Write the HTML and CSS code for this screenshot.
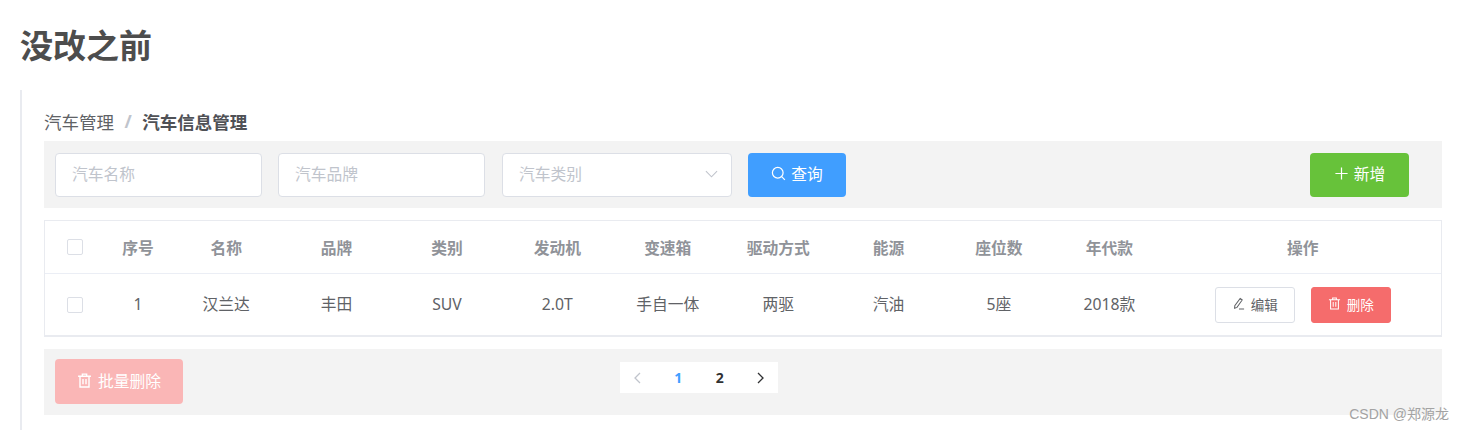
FILE: index.html
```html
<!DOCTYPE html>
<html lang="zh-CN">
<head>
  <meta charset="UTF-8" />
  <title>没改之前</title>
  <link rel="stylesheet" href="styles.css">
</head>
<body>

  <h1 class="title">没改之前</h1>

  <div class="panel">
    <div class="crumb">
      <span>汽车管理</span>
      <span class="crumb-sep">/</span>
      <b>汽车信息管理</b>
    </div>

    <div class="bar toolbar">
      <div class="field field-name">汽车名称</div>
      <div class="field field-brand">汽车品牌</div>
      <div class="field field-type">
        <span>汽车类别</span>
        <svg class="arrow" viewBox="0 0 14 8"><path d="M1 1l6 6 6-6" /></svg>
      </div>
      <button class="btn btn-blue">
        <svg class="icon" viewBox="0 0 16 16"><circle cx="7.2" cy="7.2" r="5.7" /><path d="M11.4 11.4l3.4 3.4" /></svg>
        查询
      </button>
      <button class="btn btn-green">
        <svg class="icon" viewBox="0 0 16 16"><path d="M8 1.5v13M1.5 8h13" /></svg>
        新增
      </button>
    </div>

    <table class="grid">
      <colgroup>
        <col class="c-check"><col class="c-num">
        <col class="c-std"><col class="c-std"><col class="c-std"><col class="c-std"><col class="c-std">
        <col class="c-std"><col class="c-std"><col class="c-std"><col class="c-std">
        <col>
      </colgroup>
      <thead>
        <tr>
          <th><span class="check"></span></th>
          <th>序号</th>
          <th>名称</th>
          <th>品牌</th>
          <th>类别</th>
          <th>发动机</th>
          <th>变速箱</th>
          <th>驱动方式</th>
          <th>能源</th>
          <th>座位数</th>
          <th>年代款</th>
          <th>操作</th>
        </tr>
      </thead>
      <tbody>
        <tr>
          <td><span class="check check-row"></span></td>
          <td>1</td>
          <td>汉兰达</td>
          <td>丰田</td>
          <td>SUV</td>
          <td>2.0T</td>
          <td>手自一体</td>
          <td>两驱</td>
          <td>汽油</td>
          <td>5座</td>
          <td>2018款</td>
          <td>
            <div class="ops">
              <button class="btn-small btn-plain">
                <svg class="icon-small" viewBox="0 0 14 14"><path d="M8.8 1.6l2.2 1.6-5.6 8-2.6 1 .2-2.8zM7.5 13h5.5" /></svg>
                编辑
              </button>
              <button class="btn-small btn-red">
                <svg class="icon-small" viewBox="0 0 14 14"><path d="M1 3h12M5 3V1h4v2M2.8 3v10h8.4V3M5.6 5.5v5M8.4 5.5v5" /></svg>
                删除
              </button>
            </div>
          </td>
        </tr>
      </tbody>
    </table>

    <div class="bar footer">
      <button class="btn btn-batch">
        <svg class="icon" viewBox="0 0 14 14"><path d="M1 3h12M5 3V1h4v2M2.8 3v10h8.4V3M5.6 5.5v5M8.4 5.5v5" /></svg>
        批量删除
      </button>
      <div class="pager">
        <svg class="pager-arrow off" viewBox="0 0 8 12"><path d="M7 1L2 6l5 5" /></svg>
        <span class="page on">1</span>
        <span class="page">2</span>
        <svg class="pager-arrow" viewBox="0 0 8 12"><path d="M1 1l5 5-5 5" /></svg>
      </div>
    </div>
  </div>

  <div class="mark">CSDN @郑源龙</div>

</body>
</html>
```

FILE: styles.css
```css
html, body {
  height: 430px;
  overflow: hidden;
}

body {
  margin: 0;
  position: relative;
  background: #fff;
  color: #606266;
  font-family: "Noto Sans", "Noto Sans CJK SC", sans-serif;
  font-size: 15.75px;
}

.title {
  margin: 0;
  padding: 21px 0 0 20px;
  height: 90px;
  box-sizing: border-box;
  font-family: "Noto Sans CJK SC", sans-serif;
  font-size: 33px;
  line-height: 46px;
  font-weight: 700;
  color: #4d4d4d;
}

.panel {
  margin: 0 22px 0 20px;
  height: 340px;
  box-sizing: border-box;
  border-left: 2px solid #e9ebf0;
  padding: 20px 0 0 22px;
}

.crumb {
  height: 31px;
  box-sizing: border-box;
  padding-bottom: 9px;
  display: flex;
  align-items: center;
  font-size: 17.5px;
  color: #606266;
}

.crumb-sep {
  margin: 0 10.5px;
  font-weight: 700;
  color: #c0c4cc;
}

.crumb b {
  color: #4f5156;
}

.bar {
  background: #f3f3f3;
  box-sizing: border-box;
}

.toolbar {
  height: 67px;
  display: flex;
  align-items: center;
  padding: 0 33px 0 11px;
}

.field {
  height: 44px;
  box-sizing: border-box;
  background: #fff;
  border: 1px solid #dcdfe6;
  border-radius: 4px;
  padding: 0 16px 2px;
  display: flex;
  align-items: center;
  justify-content: space-between;
  color: #c0c4cc;
}

.field-name { width: 207px; margin-right: 16px; }
.field-brand { width: 207px; margin-right: 17px; }
.field-type { width: 230px; margin-right: 16px; padding-right: 13px; }

.arrow {
  width: 13px;
  height: 8px;
  fill: none;
  stroke: #c0c4cc;
  stroke-width: 1.2;
}

.btn {
  height: 44px;
  border: 0;
  border-radius: 4px;
  padding: 0 0 2px;
  display: flex;
  align-items: center;
  justify-content: center;
  gap: 5px;
  color: #fff;
  font: inherit;
}

.icon {
  width: 15px;
  height: 15px;
  fill: none;
  stroke: #fff;
  stroke-width: 1.3;
}

.btn-blue { width: 98px; background: #409eff; }
.btn-green { width: 99px; margin-left: auto; background: #67c23a; }
.btn-batch { width: 128px; height: 45px; background: #fab6b6; gap: 6px; }

.grid {
  width: 100%;
  margin: 12px 0;
  table-layout: fixed;
  border-collapse: separate;
  border-spacing: 0;
  border: 1px solid #e9ebf0;
  border-bottom-width: 2px;
  box-sizing: border-box;
}

.c-check { width: 60px; }
.c-num { width: 66px; }
.c-std { width: 110.4px; }

.grid th, .grid td {
  padding: 0;
  text-align: center;
}

.grid th {
  height: 52px;
  border-bottom: 1px solid #ebeef5;
  color: #909399;
  font-weight: 700;
}

.grid td {
  height: 59px;
  padding-bottom: 2px;
}

.check {
  display: block;
  width: 14px;
  height: 14px;
  margin: 0 auto;
  background: #fff;
  border: 1px solid #dcdfe6;
  border-radius: 2px;
}

.check-row {
  margin-top: 2px;
}

.ops {
  display: flex;
  justify-content: center;
  gap: 16px;
  margin-top: 2px;
}

.btn-small {
  width: 80px;
  height: 36px;
  border-radius: 3px;
  padding: 0 0 2px;
  display: flex;
  align-items: center;
  justify-content: center;
  gap: 6px;
  font: inherit;
  font-size: 13.5px;
}

.btn-plain {
  background: #fff;
  border: 1px solid #dcdfe6;
  color: #606266;
}

.btn-red {
  background: #f56c6c;
  border: 1px solid #f56c6c;
  color: #fff;
}

.icon-small {
  width: 13px;
  height: 13px;
  fill: none;
  stroke: currentColor;
  stroke-width: 1.1;
}

.footer {
  height: 66px;
  position: relative;
  padding: 10px 0 0 11px;
}

.pager {
  position: absolute;
  left: 576px;
  top: 13px;
  width: 158px;
  height: 31px;
  background: #fff;
  display: flex;
  align-items: center;
  justify-content: space-between;
  padding: 0 13px;
  box-sizing: border-box;
  font-size: 14px;
  font-weight: 700;
  color: #303133;
}

.page.on {
  color: #409eff;
}

.pager-arrow {
  width: 8px;
  height: 12px;
  fill: none;
  stroke: #303133;
  stroke-width: 1.3;
}

.pager-arrow.off {
  stroke: #c0c4cc;
}

.mark {
  position: absolute;
  right: 15px;
  top: 404px;
  font-family: "Liberation Sans", "Noto Sans CJK SC", sans-serif;
  font-size: 14px;
  line-height: 20px;
  color: #a3a3a3;
}
```
